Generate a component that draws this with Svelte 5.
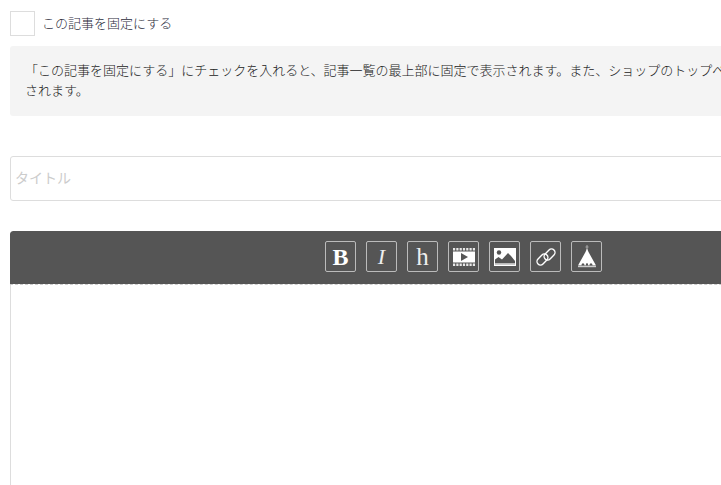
<script lang="ts">
  let pinned = $state(false);
  let title = $state("");
</script>

<div class="page">
  <label class="pinRow">
    <input type="checkbox" class="pinCheck" bind:checked={pinned} />
    <span>この記事を固定にする</span>
  </label>

  <div class="note">
    「この記事を固定にする」にチェックを入れると、記事一覧の最上部に固定で表示されます。また、ショップのトップページにも固定で表示されます。
  </div>

  <input class="titleInput" type="text" placeholder="タイトル" bind:value={title} />

  <div class="editor">
    <div class="toolbar">
      <button class="tool bold" aria-label="太字">B</button>
      <button class="tool italic" aria-label="斜体">I</button>
      <button class="tool heading" aria-label="見出し">h</button>
      <button class="tool" aria-label="動画">
        <svg width="22" height="18" viewBox="0 0 22 18">
          <path fill="#fff" d="M0 3.500h22v11H0z" />
          <path fill="#e8e8e8" d="M0 0h2.200v2.500H0z M3.300 0h2.200v2.500H3.300z M6.600 0h2.200v2.500H6.600z M9.900 0h2.200v2.500H9.900z M13.200 0h2.200v2.500h-2.200z M16.500 0h2.200v2.500h-2.200z M19.800 0H22v2.500h-2.200z" />
          <path fill="#e8e8e8" d="M0 15.500h2.200V18H0z M3.300 15.500h2.200V18H3.300z M6.600 15.500h2.200V18H6.600z M9.900 15.500h2.200V18H9.900z M13.200 15.500h2.200V18h-2.200z M16.500 15.500h2.200V18h-2.200z M19.800 15.500H22V18h-2.200z" />
          <path fill="#555" d="M8 5v8l7-4z" />
        </svg>
      </button>
      <button class="tool" aria-label="画像">
        <svg width="22" height="18" viewBox="0 0 22 18">
          <path fill="#fff" d="M0 0h22v18H0z" />
          <circle cx="5" cy="4.500" r="2.200" fill="#555" />
          <path fill="#555" d="M1 15.500v-4l3.500-2.500 3.500 2.500 6-6.500 3 3 4 5v2.500z" />
          <path fill="#ccc" d="M1 15.500h20v1.500H1z" />
        </svg>
      </button>
      <button class="tool" aria-label="リンク">
        <svg width="20" height="20" viewBox="0 0 20 20" fill="none" stroke="#fff" stroke-width="1.400">
          <rect x="0.200" y="9" width="12.500" height="7" rx="3.500" transform="rotate(-45 6.450 12.500)" />
          <rect x="7.300" y="4" width="12.500" height="7" rx="3.500" transform="rotate(-45 13.550 7.500)" />
        </svg>
      </button>
      <button class="tool" aria-label="ショップ">
        <svg width="20" height="24" viewBox="0 0 20 24">
          <path fill="#aaa" d="M9.500 0h1v5h-1z M8.500 1.500h3v1h-3z" />
          <path fill="#fff" d="M10 3.500 11.500 7 19 20.500H1L8.500 7z" />
          <path fill="#555" d="M4.500 20.500c0-3 3-3 3 0z M8.800 20.500c0-3.500 2.400-3.500 2.400 0z M12.500 20.500c0-3 3-3 3 0z" />
          <path fill="#ccc" d="M1 21h18v1.200H1z" />
        </svg>
      </button>
    </div>
    <div class="body"></div>
  </div>
</div>

<style>
  :global(body) {
    overflow: hidden;
  }

  .page {
    width: 907px;
    height: 485px;
    margin-left: 10px;
    padding-top: 11px;
    box-sizing: border-box;
    overflow: hidden;
    font-family: "Noto Sans CJK JP", "Noto Sans", sans-serif;
    font-weight: 300;
    color: #222;
  }

  .pinRow {
    display: flex;
    align-items: center;
    gap: 7px;
    height: 25px;
    font-size: 13px;
    color: #2c2c3c;
  }

  .pinRow span {
    padding-bottom: 2px;
  }

  .pinCheck {
    appearance: none;
    width: 25px;
    height: 25px;
    margin: 0;
    border: 1px solid #ddd;
    background: #fff;
  }

  .note {
    margin-top: 10px;
    height: 70px;
    box-sizing: border-box;
    padding: 14px 70px 0 15px;
    background: #f4f4f4;
    border-radius: 3px;
    font-size: 13px;
    line-height: 20px;
  }

  .titleInput {
    display: block;
    width: 100%;
    height: 45px;
    margin-top: 40px;
    padding: 0 4px 3px;
    box-sizing: border-box;
    border: 1px solid #ddd;
    border-radius: 3px;
    font-family: inherit;
    font-size: 14px;
    background: #fff;
  }

  .titleInput::placeholder {
    color: #ccc;
  }

  .editor {
    margin-top: 30px;
  }

  .toolbar {
    display: flex;
    justify-content: center;
    gap: 10px;
    height: 54px;
    padding-top: 10px;
    box-sizing: border-box;
    background: #555;
    background-clip: padding-box;
    border-bottom: 1px dashed #ccc;
    border-radius: 3px 3px 0 0;
  }

  .tool {
    display: flex;
    align-items: center;
    justify-content: center;
    width: 31px;
    height: 31px;
    padding: 0;
    box-sizing: border-box;
    border: 1px solid #bbb;
    border-radius: 2px;
    background: transparent;
    color: #fff;
    font-family: "Liberation Serif", serif;
    font-size: 24px;
    line-height: 1;
  }

  .bold {
    font-weight: bold;
  }

  .italic {
    font-style: italic;
    font-size: 22px;
    color: #eee;
  }

  .heading {
    font-size: 25px;
    color: #eee;
  }

  .body {
    height: 300px;
    border-left: 1px solid #ddd;
  }
</style>
